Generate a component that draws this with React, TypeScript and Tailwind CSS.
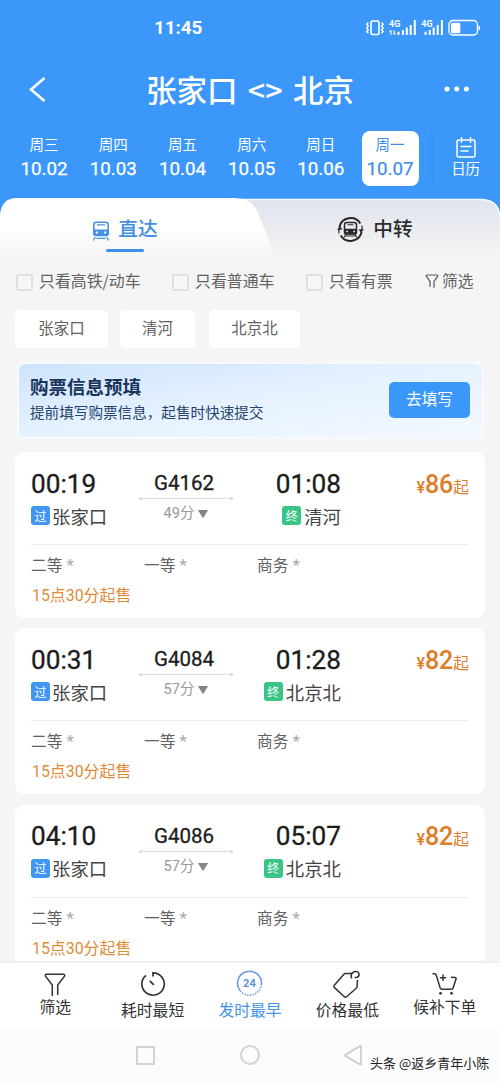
import React from 'react';

const days = [
  ['周三', '10.02'],
  ['周四', '10.03'],
  ['周五', '10.04'],
  ['周六', '10.05'],
  ['周日', '10.06'],
  ['周一', '10.07'],
];

const trains = [
  { dep: '00:19', no: 'G4162', arr: '01:08', dur: '49分', to: '清河', price: '86' },
  { dep: '00:31', no: 'G4084', arr: '01:28', dur: '57分', to: '北京北', price: '82' },
  { dep: '04:10', no: 'G4086', arr: '05:07', dur: '57分', to: '北京北', price: '82' },
];

function StatusIcons() {
  return (
    <svg width="116" height="18" viewBox="0 0 116 18" fill="none" stroke="#fff">
      <rect x="7" y="2" width="8" height="13.500" rx="1.500" strokeWidth="1.600" />
      <path d="M4.300 3.500l-1.600 1.800 1.600 1.800-1.600 1.800 1.600 1.800-1.600 1.800 1.600 1.800M17.500 3.500l1.600 1.800-1.600 1.800 1.600 1.800-1.600 1.800 1.600 1.800-1.600 1.800" strokeWidth="1.400" />
      <g fill="#fff" stroke="none" fontSize="9" fontWeight="700" fontFamily="Roboto, sans-serif">
        <text x="25" y="8.300">4G</text>
        <text x="57.300" y="8.300">4G</text>
      </g>
      <path d="M27 11.500v4.300M25.600 12.900l1.400-1.400M30 11.200v4.300M30 15.500l1.400-1.400" strokeWidth="1.100" />
      <path d="M34.500 16v-3.200M39 16v-5M42.800 16v-7.500M46.700 16V6M50.800 16V1M61.500 16v-3.200M65.700 16v-5M69.700 16v-7.500M73.700 16V6M77.900 16V1" strokeWidth="2" />
      <rect x="85" y="1.500" width="28.500" height="14.500" rx="4" strokeWidth="1.400" />
      <rect x="87" y="3.700" width="9.300" height="10.500" rx="1.500" fill="#fff" stroke="none" />
      <path d="M115.300 7v4" strokeWidth="1.400" />
    </svg>
  );
}

function CalendarIcon() {
  return (
    <svg width="20" height="21" viewBox="0 0 20 21" fill="none" stroke="#fff" strokeWidth="1.500">
      <path d="M4 3H2.600Q1 3 1 4.600v13.800Q1 20 2.600 20h14.800q1.600 0 1.600-1.600V4.600Q19 3 17.400 3H16M7 3h6M5.500.5v4.800M14.500.5v4.800M5 9.500h10M5 14h7" strokeLinecap="round" />
    </svg>
  );
}

function TrainIcon() {
  return (
    <svg width="18" height="20" viewBox="0 0 18 20">
      <path d="M4.500 1.200h9q2.700 0 2.700 2.600v8.700q0 2-2 2H3.800q-2 0-2-2V3.800q0-2.600 2.700-2.600Z" fill="none" stroke="#4590e4" strokeWidth="1.600" />
      <path fillRule="evenodd" fill="#4590e4" d="M1.800 8.500h14.400v4.500q0 1.800-2 1.800H3.800q-2 0-2-1.800ZM4.800 10.300a1.200 1.200 0 1 0 .1 0ZM13.100 10.300a1.200 1.200 0 1 0 .1 0Z" />
      <path d="M5 3.800h8M3.300 16l-2 3.500M14.700 16l2 3.500M4.500 17.300h9" fill="none" stroke="#4590e4" strokeWidth="1.300" />
    </svg>
  );
}

function TransferIcon() {
  return (
    <svg width="27" height="27" viewBox="0 0 27 27" fill="none" stroke="#292929">
      <path d="M2.400 11A11.500 11.500 0 0 1 23.300 7.500M24.600 16A11.500 11.500 0 0 1 3.700 19.500" strokeWidth="2" />
      <path d="M25 9.500q.6 4-.8 7M2 17.500q-.6-4 .8-7" strokeWidth="1.200" />
      <path d="M.2 14l2.600-4 2.600 3.400ZM26.800 13l-2.600 4-2.600-3.400Z" fill="#292929" stroke="none" />
      <path d="M9.800 6.500h7.400q2.300 0 2.300 2.300v7.400q0 1.800-1.800 1.800H9.300q-1.800 0-1.800-1.800V8.800q0-2.300 2.300-2.300Z" strokeWidth="1.500" />
      <path fillRule="evenodd" fill="#292929" stroke="none" d="M7.500 12.800h12v3.600q0 2-2 2h-8q-2 0-2-2ZM10 14.500a.9.9 0 1 0 .1 0ZM17 14.500a.9.9 0 1 0 .1 0Z" />
      <path d="M9 18l-1.700 3.200M18 18l1.700 3.200M8.500 20h10M10.500 8.800h6" strokeWidth="1.100" />
    </svg>
  );
}

function Check({ label, className }: { label: string; className: string }) {
  return (
    <div className={`flex items-center ${className}`}>
      <span className="mt-[3px] h-[17px] w-[17px] shrink-0 rounded-[2px] border-2 border-[#e0e0e0] bg-[#f7f7f7]" />
      <span className="ml-[6px] whitespace-nowrap text-[15.900px] leading-5">{label}</span>
    </div>
  );
}

function Badge({ text, className }: { text: string; className: string }) {
  return (
    <span className={`flex h-[19px] w-[19px] items-center justify-center rounded-[3px] text-[12px] leading-none text-white ${className}`}>
      {text}
    </span>
  );
}

function TrainCard({ t }: { t: (typeof trains)[number] }) {
  return (
    <article className="h-[166px] shrink-0 rounded-[9px] bg-white px-4">
      <div className="flex h-[93px] border-b border-[#ededed]">
        <div className="w-[108px] pt-[15.500px]">
          <div className="font-[Roboto,sans-serif] text-[26.200px] leading-8 text-[#1c1c1c] [-webkit-text-stroke:0.300px_#1c1c1c]">{t.dep}</div>
          <div className="mt-[4px] flex h-6 items-center gap-[2px]">
            <Badge text="过" className="bg-[#3f97f3]" />
            <span className="text-[18.400px] leading-6 text-[#444]">张家口</span>
          </div>
        </div>
        <div className="flex w-[94px] flex-col items-center pt-[19px]">
          <div className="-ml-[4px] font-[Roboto,sans-serif] text-[20.500px] leading-6 text-[#1c1c1c] [-webkit-text-stroke:0.300px_#1c1c1c]">{t.no}</div>
          <div className="mt-[2px] flex w-full items-center">
            <span className="h-[3px] w-[3px] rounded-full bg-[#d8d8d8]" />
            <span className="h-px flex-1 bg-[#dedede]" />
            <span className="h-[3px] w-[3px] rounded-full bg-[#d8d8d8]" />
          </div>
          <div className="mt-[4px] flex items-center gap-[4px] font-[Roboto,'Noto_Sans_CJK_SC',sans-serif] text-[14.500px] leading-5 text-[#999]">
            {t.dur}
            <svg width="10" height="8" viewBox="0 0 10 8" fill="#858585"><path d="M.7 0h8.600q.8 0 .4.8L5.500 7.500q-.5.7-1 0L.3.8Q-.1 0 .7 0Z" /></svg>
          </div>
        </div>
        <div className="flex w-[108px] flex-col items-end pt-[15.500px]">
          <div className="font-[Roboto,sans-serif] text-[26.200px] leading-8 text-[#1c1c1c] [-webkit-text-stroke:0.300px_#1c1c1c]">{t.arr}</div>
          <div className="mt-[4px] flex h-6 items-center gap-[3px]">
            <Badge text="终" className="bg-[#38c485]" />
            <span className="text-[18.400px] leading-6 text-[#444]">{t.to}</span>
          </div>
        </div>
        <div className="flex flex-1 items-baseline justify-end pt-[16.500px] text-[16px] text-[#de7d27]">
          <span className="font-[Roboto,sans-serif] font-medium">¥</span>
          <span className="font-[Roboto,sans-serif] text-[25px] font-medium leading-8">{t.price}</span>
          <span className="text-[15.700px]">起</span>
        </div>
      </div>
      <div className="mt-[10px] flex h-5 items-center text-[15.700px] leading-5 text-[#616161]">
        {['二等', '一等', '商务'].map((s) => (
          <span key={s} className="flex w-[113px] items-center">
            {s}
            <span className="ml-[4px] font-[Roboto,sans-serif] text-[17px] leading-5 text-[#aaa]">*</span>
          </span>
        ))}
      </div>
      <div className="ml-px mt-[11px] font-[Roboto,'Noto_Sans_CJK_SC',sans-serif] text-[15.900px] leading-5 text-[#df8b34]">15点30分起售</div>
    </article>
  );
}

function NavItem({ label, active, top, children }: { label: string; active?: boolean; top: string; children: React.ReactNode }) {
  return (
    <div className={`flex w-[97.400px] flex-col items-center ${active ? 'text-[#4394e8]' : 'text-[#333]'}`}>
      <div className={`flex items-center justify-center ${top}`}>{children}</div>
      <span className="text-[15.800px] leading-5">{label}</span>
    </div>
  );
}

export default function App() {
  return (
    <div className="flex h-[1082px] w-[500px] flex-col overflow-hidden bg-[#f5f5f5] font-['Noto_Sans_CJK_SC',sans-serif]">
      <header className="flex h-[198px] shrink-0 flex-col bg-[#3c97fb] text-white">
        <div className="flex h-14 items-center">
          <span className="ml-[154px] w-[210px] font-[Roboto,sans-serif] text-[18.800px] font-bold leading-6">11:45</span>
          <StatusIcons />
        </div>
        <div className="flex h-[66px] items-center">
          <svg className="ml-[28px]" width="20" height="28" viewBox="0 0 20 28" fill="none" stroke="#fff" strokeWidth="2.600"><path d="M16.500 3L3 14.500 16.500 26" /></svg>
          <h1 className="ml-[98px] flex w-[208px] justify-between text-[30.500px] font-medium leading-10">
            <span>张家口</span>
            <span>&lt;&gt;</span>
            <span>北京</span>
          </h1>
          <svg className="ml-[90px]" width="26" height="6" viewBox="0 0 26 6" fill="#fff"><circle cx="3" cy="3" r="2.500" /><circle cx="12.700" cy="3" r="2.500" /><circle cx="22.400" cy="3" r="2.500" /></svg>
        </div>
        <div className="flex pl-[9.500px] pt-[9px]">
          {days.map(([w, d], i) => (
            <div key={d} className="flex w-[69.200px] justify-center">
              <div className={`flex h-[55px] w-[57px] flex-col items-center rounded-[8px] pt-[3px] ${i === 5 ? 'bg-white text-[#4190e6]' : ''}`}>
                <span className="text-[14.500px] leading-5">{w}</span>
                <span className="mt-[2.500px] font-[Roboto,sans-serif] text-[18.800px] leading-6 [-webkit-text-stroke:0.250px_currentColor]">{d}</span>
              </div>
            </div>
          ))}
          <div className="ml-[6px] h-[55px] w-[4px] bg-gradient-to-r from-[#348fec]/50 to-transparent" />
          <div className="flex w-[62px] flex-col items-center pt-[6px]">
            <CalendarIcon />
            <span className="text-[14.500px] leading-5">日历</span>
          </div>
        </div>
      </header>

      <div className="relative h-[60px] shrink-0 bg-[#f5f5f5]">
        <svg className="absolute left-0 top-0" width="500" height="60" viewBox="0 0 500 60">
          <defs>
            <linearGradient id="idle" x1="0" y1="0" x2="0" y2="1">
              <stop offset="0" stopColor="#dfe3ed" />
              <stop offset="1" stopColor="#f5f5f5" />
            </linearGradient>
            <linearGradient id="live" x1="0" y1="0" x2="0" y2="1">
              <stop offset="0.500" stopColor="#fff" />
              <stop offset="1" stopColor="#f5f5f5" />
            </linearGradient>
          </defs>
          <path d="M0 0h500v20H0Z" fill="#3c97fb" />
          <path d="M230 1h253q17 2 17 17v42H230Z" fill="url(#idle)" />
          <path d="M240 1.500h242q17 1 18 18" fill="none" stroke="#f7faff" strokeWidth="1.300" />
          <path d="M0 60V16Q2 0 17 0h218q17 0 23 15l18 45Z" fill="url(#live)" />
        </svg>
        <div className="relative flex h-full">
          <div className="flex w-[250px] flex-col items-center">
            <div className="mt-[18px] flex h-6 items-center gap-[8px] text-[19.700px] font-medium leading-6 text-[#438ee0]">
              <span className="mt-[5px]"><TrainIcon /></span>
              直达
            </div>
            <span className="mt-[9px] h-[3px] w-[38px] rounded-full bg-[#3e8fe9]" />
          </div>
          <div className="flex flex-1 justify-center">
            <div className="mt-[18px] flex h-6 items-center gap-[9px] text-[19.700px] font-medium leading-6 text-[#2c2c2c]">
              <span className="mt-[3px]"><TransferIcon /></span>
              中转
            </div>
          </div>
        </div>
      </div>

      <main className="flex min-h-0 flex-1 flex-col overflow-hidden px-[15px] text-[#626262]">
        <div className="mt-[12.500px] flex h-5 shrink-0 items-center pl-px">
          <Check label="只看高铁/动车" className="w-[156px]" />
          <Check label="只看普通车" className="w-[134px]" />
          <Check label="只看有票" className="w-[119px]" />
          <svg className="mt-[2px]" width="14" height="15" viewBox="0 0 14 15" fill="none" stroke="#555" strokeWidth="1.200"><path d="M5 12.700V7.500L1.300 2.200Q.8 1 2 1h10q1.200 0 .7 1.200L9 7.500v6.300" /></svg>
          <span className="ml-[3px] text-[15.700px] leading-5">筛选</span>
        </div>
        <div className="mt-[19.500px] flex h-[38px] shrink-0 text-[15.500px] leading-5">
          <span className="flex w-[93px] justify-center rounded-[5px] bg-white pt-[7px]">张家口</span>
          <span className="ml-[12px] flex w-[75px] justify-center rounded-[5px] bg-white pt-[7px]">清河</span>
          <span className="ml-[14px] flex w-[91px] justify-center rounded-[5px] bg-white pt-[7px]">北京北</span>
        </div>
        <section className="ml-[2px] mt-[14px] flex h-[77px] w-[467px] shrink-0 justify-between rounded-[8px] border-2 border-[#f7fbff] bg-gradient-to-br from-[#cfe3fd] via-[#e6f2ff] to-[#f3f8ff] pl-[11px] pr-[12px]">
          <div className="pt-[10px] text-[#19345c]">
            <h2 className="text-[18.500px] font-bold leading-6">购票信息预填</h2>
            <p className="mt-[4px] text-[14.600px] leading-5 text-[#24446e]">提前填写购票信息，起售时快速提交</p>
          </div>
          <button className="mt-[18px] h-[36px] w-[81px] rounded-[5px] bg-[#3c97fb] pb-[3px] text-[15.700px] leading-5 text-white">去填写</button>
        </section>
        <div className="mt-[13px] flex flex-col gap-[10.300px]">
          {trains.map((t) => (
            <TrainCard key={t.no} t={t} />
          ))}
        </div>
      </main>

      <nav className="flex h-[67.500px] shrink-0 border-t-2 border-[#f0f0f0] bg-white pl-[6.500px]">
        <NavItem label="筛选" top="h-[34px] pt-[9px]">
          <svg width="22" height="24" viewBox="0 0 22 24" fill="none" stroke="currentColor" strokeWidth="1.500"><path d="M8.300 23V12L1.500 3.200Q.8 1.300 2.500 1.200h17q1.700.1 1 2L13.700 12v10" /></svg>
        </NavItem>
        <NavItem label="耗时最短" top="h-[37px] pt-[4px]">
          <svg width="26" height="26" viewBox="0 0 26 26" fill="none" stroke="currentColor" strokeWidth="1.700"><path d="M13 5.500V1.800A11.200 11.200 0 1 1 6 4.300M9.800 9.800l4 4" /></svg>
        </NavItem>
        <NavItem label="发时最早" active top="h-[37px] pt-[4px]">
          <svg width="27" height="27" viewBox="0 0 27 27" fill="none" stroke="#6595e2" strokeWidth="1.500">
            <path d="M4 20.500A12 12 0 1 1 25.500 14" />
            <path d="M25.500 14A12 12 0 0 1 4 20.500" strokeDasharray="1.500 1.200" />
            <text x="13.500" y="17" textAnchor="middle" fontSize="10" fontWeight="700" fill="#5d8edb" stroke="none" fontFamily="Inter, sans-serif">24</text>
          </svg>
        </NavItem>
        <NavItem label="价格最低" top="h-[37px] pt-[4px]">
          <svg width="30" height="30" viewBox="0 0 30 30" fill="none" stroke="currentColor" strokeWidth="1.500"><path d="M20 4.500h-6.500q-1 0-1.600.8L2.300 16.200q-.9 1.200 0 2.200l10 9.300q1.200 1 2.400 0L25 18.500l.5-7.500M19.500 9.500q-1.300-5 2.500-6.700 3.800-.8 4.800 1.400 1 2.800-1.500 4l-2.600.3" /></svg>
        </NavItem>
        <NavItem label="候补下单" top="h-[34px] pt-[8px]">
          <svg width="26" height="24" viewBox="0 0 26 24" fill="none" stroke="currentColor" strokeWidth="1.500"><path d="M.5 1.800h2.300q1 0 1.300 1L8.200 16q.5 1.300 1.800 1.300h9.500q1.200 0 1.600-1.200L24 7q.5-1.500-1-1.600l-4-.1M11 2.500v6.500M7.800 5.700h6.400" /><g fill="currentColor" stroke="none"><circle cx="8.500" cy="21.300" r="1.400" /><circle cx="19.500" cy="21.300" r="1.400" /></g></svg>
        </NavItem>
      </nav>

      <footer className="flex h-[53.500px] shrink-0 items-center bg-[#fcfcfc] pl-[136px]">
        <span className="h-[19px] w-[19px] rounded-[1px] border-2 border-[#d2d2d2]" />
        <span className="ml-[85px] h-[20px] w-[20px] rounded-full border-2 border-[#d2d2d2]" />
        <svg className="ml-[84px]" width="19" height="21" viewBox="0 0 19 21" fill="none" stroke="#c8c8c8" strokeWidth="1.600"><path d="M17 1.500v17.500q0 1-.9.500L1.500 11q-.9-.6 0-1.200L16.100 1q.9-.5.900.5Z" /></svg>
        <span className="ml-[7px] mt-[16px] flex gap-[3px] whitespace-nowrap text-[13px] leading-5 text-[#222] [text-shadow:-1px_-1px_0_#fff]">
          <span>头条</span>
          <span>@返乡青年小陈</span>
        </span>
      </footer>
    </div>
  );
}
